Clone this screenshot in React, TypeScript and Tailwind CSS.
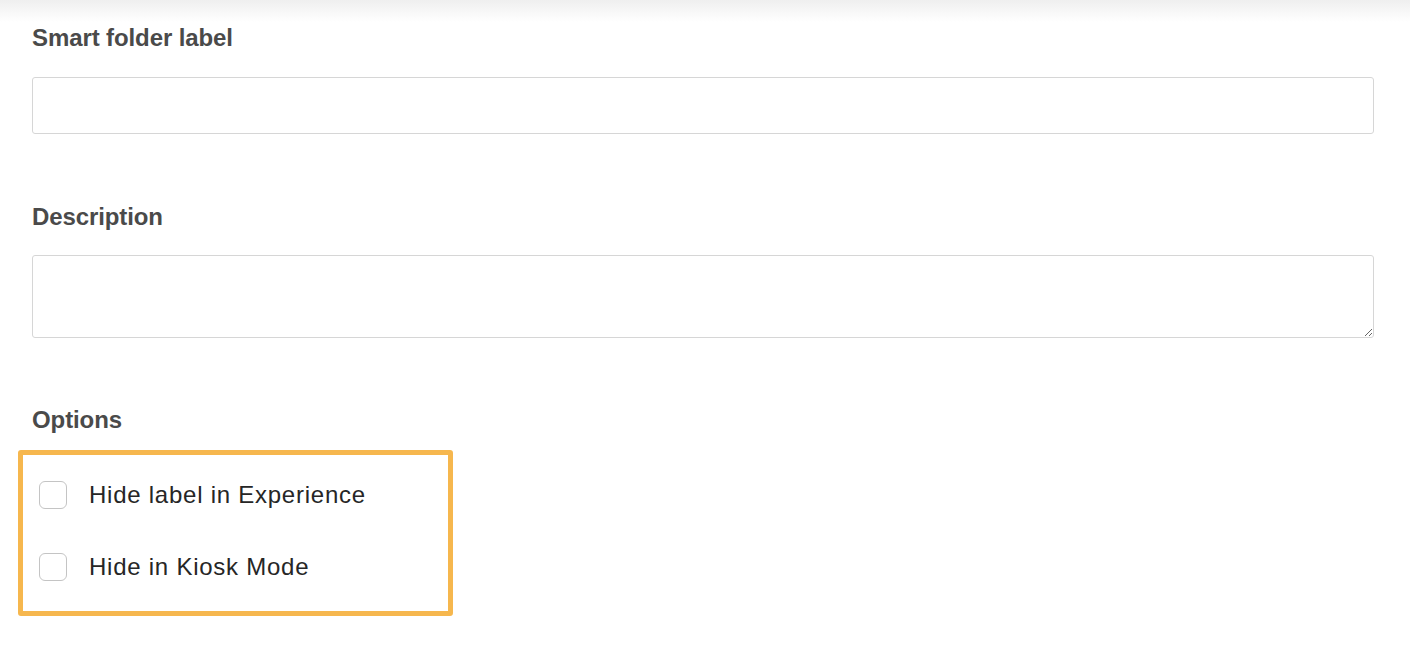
import React from "react";

export default function App() {
  return (
    <div className="relative w-full h-[658px] bg-white overflow-hidden" style={{ fontFamily: '"Liberation Sans", Arial, sans-serif' }}>
      <div className="absolute top-0 left-0 right-0 h-[22px] bg-gradient-to-b from-[#efefef] to-white" />
      <div className="relative flex flex-col pl-[32px] pr-[36px] pt-[23px]">
        <label className="block text-[24px] leading-[30px] font-bold tracking-[-0.1px] text-[#4a4a4a]">Smart folder label</label>
        <input
          type="text"
          className="mt-[24px] h-[57px] w-full rounded-[3px] border border-[#d6d6d6] bg-white px-3 outline-none"
        />
        <label className="mt-[68px] block text-[24px] leading-[30px] font-bold tracking-[-0.1px] text-[#4a4a4a]">Description</label>
        <textarea className="mt-[23px] h-[83px] w-full rounded-[3px] border border-[#d6d6d6] bg-white px-3 py-2 outline-none resize-y" />
        <div className="mt-[67px] text-[24px] leading-[30px] font-bold tracking-[-0.1px] text-[#4a4a4a]">Options</div>
        <div className="mt-[15px] -ml-[14px] w-[435px] h-[166px] rounded-[3px] border-[5px] border-[#f6b74e] pl-[16px] pt-[21px] flex flex-col gap-[34px]">
          <label className="flex items-center gap-[22px] h-[38px]">
            <span className="block w-[28px] h-[28px] rounded-[6px] border-[1.5px] border-[#c4c4c4] bg-white" />
            <span className="text-[24px] leading-[30px] tracking-[0.75px] text-[#262626]">Hide label in Experience</span>
          </label>
          <label className="flex items-center gap-[22px] h-[38px]">
            <span className="block w-[28px] h-[28px] rounded-[6px] border-[1.5px] border-[#c4c4c4] bg-white" />
            <span className="text-[24px] leading-[30px] tracking-[0.75px] text-[#262626]">Hide in Kiosk Mode</span>
          </label>
        </div>
      </div>
    </div>
  );
}
